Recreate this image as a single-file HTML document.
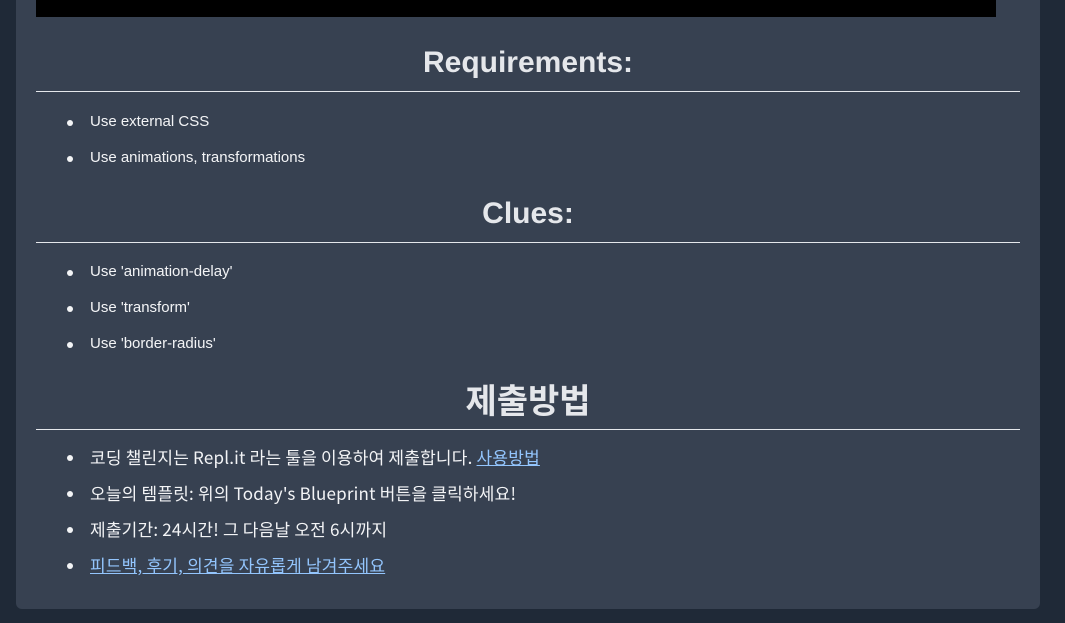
<!DOCTYPE html>
<html><head><meta charset="utf-8"><style>
body{margin:0;width:1065px;height:623px;background:#1f2937;overflow:hidden;font-family:"Liberation Sans","Noto Sans CJK KR",sans-serif;color:#f3f4f6;position:relative}
.card{position:absolute;left:16px;top:-10px;width:1024px;height:619px;background:#374151;border-radius:0 0 6px 6px}
.bar{position:absolute;left:36px;top:0;width:960px;height:17px;background:#000}
h2{position:absolute;left:36px;width:984px;margin:0;text-align:center;font-size:30px;font-weight:bold;color:#e5e7eb}
.kr{font-family:"Noto Sans CJK KR",sans-serif}
.hr{position:absolute;left:36px;width:984px;height:1px;background:#e5e7eb}
.li{position:absolute;left:90px;font-size:15px;line-height:20px;white-space:nowrap}
.li.kr{font-size:17px;letter-spacing:0.2px}
.li:before{content:"";position:absolute;left:-23px;top:8px;width:6px;height:6px;border-radius:50%;background:#f3f4f6}
a{color:#93c5fd;text-decoration:underline}
</style></head><body>
<div class="card"></div>
<div class="bar"></div>
<h2 style="top:46px">Requirements:</h2>
<div class="hr" style="top:91px"></div>
<div class="li" style="top:112px">Use external CSS</div>
<div class="li" style="top:148px">Use animations, transformations</div>
<h2 style="top:197px">Clues:</h2>
<div class="hr" style="top:242px"></div>
<div class="li" style="top:262px">Use 'animation-delay'</div>
<div class="li" style="top:298px">Use 'transform'</div>
<div class="li" style="top:334px">Use 'border-radius'</div>
<h2 class="kr" style="top:374px;font-size:34px">제출방법</h2>
<div class="hr" style="top:429px"></div>
<div class="li kr" style="top:447px">코딩 챌린지는 Repl.it 라는 툴을 이용하여 제출합니다. <a>사용방법</a></div>
<div class="li kr" style="top:483px">오늘의 템플릿: 위의 Today's Blueprint 버튼을 클릭하세요!</div>
<div class="li kr" style="top:519px">제출기간: 24시간! 그 다음날 오전 6시까지</div>
<div class="li kr" style="top:555px"><a>피드백, 후기, 의견을 자유롭게 남겨주세요</a></div>
</body></html>
